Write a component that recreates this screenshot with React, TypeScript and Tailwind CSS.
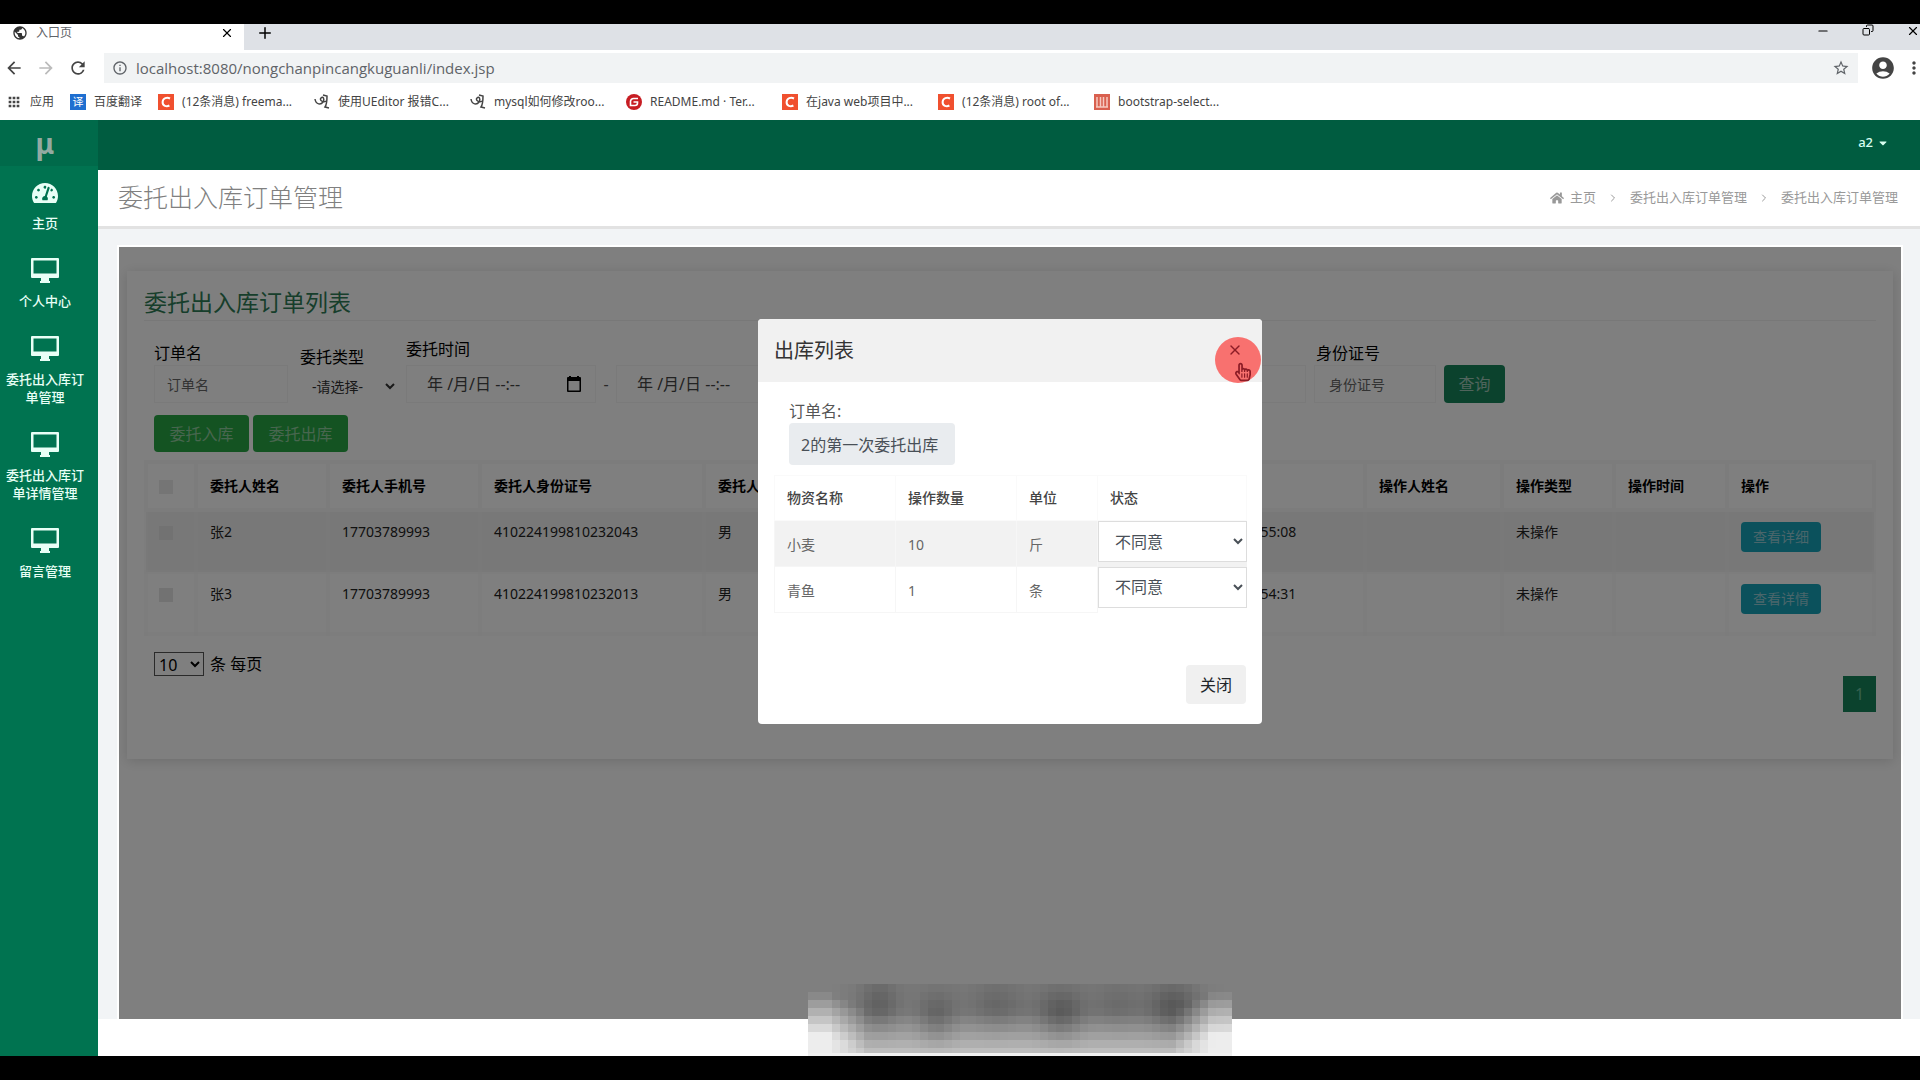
import React from 'react';
import {
  MdArrowBack,
  MdArrowForward,
  MdRefresh,
  MdInfoOutline,
  MdStarBorder,
  MdAccountCircle,
  MdMoreVert,
  MdApps,
  MdPublic,
} from 'react-icons/md';
import { FaTachometerAlt, FaHome, FaCaretDown, FaRegHandPointer } from 'react-icons/fa';
import { FiX, FiPlus, FiMinus, FiCopy, FiChevronRight } from 'react-icons/fi';

const bookmarks = [
  { icon: 'csdn', label: '(12条消息) freema...' },
  { icon: 'spring', label: '使用UEditor 报错C...' },
  { icon: 'spring', label: 'mysql如何修改roo...' },
  { icon: 'gitee', label: 'README.md · Ter...' },
  { icon: 'csdn', label: '在java web项目中...' },
  { icon: 'csdn', label: '(12条消息) root of...' },
  { icon: 'book', label: 'bootstrap-select...' },
];

const menuItems = [
  { label: '主页', icon: 'gauge' },
  { label: '个人中心', icon: 'monitor' },
  { label: '委托出入库订单管理', icon: 'monitor' },
  { label: '委托出入库订单详情管理', icon: 'monitor' },
  { label: '留言管理', icon: 'monitor' },
];

const columns = [
  '委托人姓名',
  '委托人手机号',
  '委托人身份证号',
  '委托人性别',
  '',
  '',
  '委托时间',
  '操作人姓名',
  '操作类型',
  '操作时间',
  '操作',
];

const orders = [
  ['张2', '17703789993', '410224199810232043', '男', '', '', '2021-03-05 13:55:08', '', '未操作', ''],
  ['张3', '17703789993', '410224199810232013', '男', '', '', '2021-03-05 13:54:31', '', '未操作', ''],
];

const goods = [
  { name: '小麦', count: 10, unit: '斤' },
  { name: '青鱼', count: 1, unit: '条' },
];

function BookmarkIcon({ type }: { type: string }) {
  if (type === 'csdn') {
    return (
      <svg viewBox="0 0 16 16" className="h-4 w-4 shrink-0">
        <rect width="16" height="16" fill="#f0502f" />
        <path d="M12 4.500C9 3 5 4 4.600 8c-.2 4 4 5 6.800 3.500" fill="none" stroke="#fff" strokeWidth="2" />
      </svg>
    );
  }
  if (type === 'gitee') {
    return (
      <svg viewBox="0 0 16 16" className="h-4 w-4 shrink-0">
        <circle cx="8" cy="8" r="8" fill="#c71d23" />
        <path d="M12 4.500H7.500a3 3 0 0 0-3 3v4h4.500a2.500 2.500 0 0 0 2.500-2.500v-1H7.500" fill="none" stroke="#fff" strokeWidth="1.600" />
      </svg>
    );
  }
  if (type === 'book') {
    return (
      <svg viewBox="0 0 16 16" className="h-4 w-4 shrink-0">
        <rect width="16" height="16" fill="#d9604f" />
        <path d="M3 3v10M6.500 3v10M9.500 3v10M13 3v10M2 13h12" stroke="#f6c9c0" strokeWidth="1.500" />
      </svg>
    );
  }
  return (
    <svg viewBox="0 0 16 16" className="h-4 w-4 shrink-0" fill="none" stroke="#444" strokeWidth="1.500">
      <path d="M1 5c1 6 6 6 8 3s0-6-2-4 2 5 5 3M9 1l4 1c0 4 0 8-2 11l4 1" />
    </svg>
  );
}

function MonitorIcon() {
  return (
    <svg viewBox="0 0 28 26" className="h-[26px] w-7" fill="#e8fff6">
      <path fillRule="evenodd" d="M1 0h26a1 1 0 0 1 1 1v18a1 1 0 0 1-1 1H1a1 1 0 0 1-1-1V1a1 1 0 0 1 1-1zm1.500 2.500v13h23v-13z" />
      <path d="M10 20h8v3h1v2H9v-2h1z" />
    </svg>
  );
}

function DatePickerIcon() {
  return (
    <svg viewBox="0 0 18 18" className="h-[18px] w-[18px] shrink-0" fill="#000">
      <path fillRule="evenodd" d="M4 1h2v1h6V1h2v1h1a1 1 0 0 1 1 1v13a1 1 0 0 1-1 1H3a1 1 0 0 1-1-1V3a1 1 0 0 1 1-1h1zM3.500 6v9.500h11V6z" />
    </svg>
  );
}

function BrowserChrome() {
  return (
    <div className="text-[#5f6368]">
      <div className="flex h-[26px] items-stretch bg-[#dee1e6]">
        <div className="flex w-[244px] items-start bg-white pl-3 pr-2.5 text-xs leading-[18px]">
          <MdPublic className="mr-2 h-[18px] w-4 text-[#333]" />
          <span className="flex-1">入口页</span>
          <button aria-label="关闭标签页" className="pt-0.5">
            <FiX className="h-3.5 w-3.5 text-black" />
          </button>
        </div>
        <button aria-label="新标签页" className="ml-3 self-start">
          <FiPlus className="h-[18px] w-[18px] text-black" />
        </button>
        <div className="ml-auto flex items-start gap-8 text-black">
          <FiMinus className="h-3.5 w-3.5" />
          <FiCopy className="h-3 w-3 -scale-x-100" />
          <FiX className="h-3.5 w-3.5" />
        </div>
      </div>
      <div className="flex h-9 items-center bg-white px-1">
        <button aria-label="后退" className="w-8">
          <MdArrowBack className="h-5 w-5 text-[#444]" />
        </button>
        <button aria-label="前进" className="w-8">
          <MdArrowForward className="h-5 w-5 text-[#bbb]" />
        </button>
        <button aria-label="刷新" className="w-9">
          <MdRefresh className="h-5 w-5 text-[#444]" />
        </button>
        <div className="flex h-[30px] flex-1 items-center bg-[#f1f3f4] px-2">
          <MdInfoOutline className="mr-2 h-4 w-4" />
          <input
            aria-label="地址"
            className="flex-1 bg-transparent font-['Open_Sans'] text-[15px] outline-none"
            defaultValue="localhost:8080/nongchanpincangkuguanli/index.jsp"
          />
          <MdStarBorder className="h-[18px] w-[18px]" />
        </div>
        <MdAccountCircle className="ml-3 h-[26px] w-[26px] text-[#444]" />
        <MdMoreVert className="ml-2 -mr-2 h-5 w-5 text-[#444]" />
      </div>
      <div className="flex h-[34px] items-center bg-white pb-0.5 pl-1.5 text-xs whitespace-nowrap text-[#444]">
        <MdApps className="mr-2 h-4 w-4" />
        <a href="#apps" className="mr-4">
          应用
        </a>
        <span className="mr-2 flex h-4 w-4 items-center justify-center bg-[#1f6fd0] text-[11px] text-white">译</span>
        <a href="#fanyi" className="mr-4">
          百度翻译
        </a>
        {bookmarks.map((item) => (
          <a key={item.label} href="#bookmark" className="flex w-[156px] items-center gap-2">
            <BookmarkIcon type={item.icon} />
            {item.label}
          </a>
        ))}
      </div>
    </div>
  );
}

function Sidebar() {
  return (
    <aside className="w-[98px] shrink-0 bg-[#007350]">
      <div className="flex h-[46px] items-center justify-center bg-[#006a4a] pr-2 text-[28px] font-bold text-[#93aaa2]">
        μ
      </div>
      <nav>
        {menuItems.map((item) => (
          <a
            key={item.label}
            href="#menu"
            className="flex flex-col items-center py-3 pr-3 pl-1 text-center text-[13px] leading-[18px] font-medium text-[#e8fff6]"
          >
            <span className="mb-2 flex h-7 items-end">
              {item.icon === 'gauge' ? <FaTachometerAlt className="h-[26px] w-[26px]" /> : <MonitorIcon />}
            </span>
            {item.label}
          </a>
        ))}
      </nav>
    </aside>
  );
}

const fieldClass = 'h-[38px] border border-[#f4f4f4] bg-white text-sm text-[#555] placeholder:text-[#666]';

function DateField({ label, id }: { label?: string; id: string }) {
  return (
    <div className="flex flex-col">
      {label && (
        <label htmlFor={id} className="mb-1 leading-6">
          {label}
        </label>
      )}
      <div className={`flex w-[190px] items-center pr-3 pl-5 ${fieldClass}`}>
        <input id={id} aria-label="委托时间" className="w-full text-base outline-none placeholder:text-[#444]" placeholder="年 /月/日 --:--" />
        <DatePickerIcon />
      </div>
    </div>
  );
}

function OrderPage() {
  return (
    <div className="mx-2 mt-6 bg-white px-[17px] pt-3 pb-[47px] text-base text-black shadow-[0_2px_12px_rgba(0,0,0,0.15)]">
      <h3 className="h-[38px] border-b border-[#f0f0f0] text-[23px] leading-[38px] text-[#2f7d57]">委托出入库订单列表</h3>

      <form className="mt-4 flex items-end pl-2.5">
        <div className="mr-3 flex flex-col">
          <label htmlFor="name" className="leading-6">
            订单名
          </label>
          <input id="name" placeholder="订单名" className={`w-[134px] px-3 ${fieldClass}`} />
        </div>
        <div className="mr-2 flex flex-col">
          <label htmlFor="type" className="leading-6">
            委托类型
          </label>
          <select id="type" className="h-[34px] w-[98px] bg-white px-2 text-sm text-[#333]">
            <option>-请选择-</option>
          </select>
        </div>
        <DateField id="start" label="委托时间" />
        <span className="w-5 text-center leading-[38px] text-[#555]">-</span>
        <DateField id="end" />
        <div className="mr-2 ml-[378px] flex flex-col">
          <label htmlFor="phone" className="leading-6">
            手机号
          </label>
          <input id="phone" className={`w-[122px] px-3 ${fieldClass}`} />
        </div>
        <div className="mr-2 flex flex-col">
          <label htmlFor="card" className="pl-0.5 leading-6">
            身份证号
          </label>
          <input id="card" placeholder="身份证号" className={`w-[122px] px-3.5 ${fieldClass}`} />
        </div>
        <button type="button" className="h-[38px] w-[61px] rounded-sm bg-[#17855a] text-[#a0c8b8]">
          查询
        </button>
      </form>

      <div className="mt-3 flex gap-1 pl-2.5">
        <button className="h-[37px] w-[95px] rounded-sm bg-[#28a745] text-[#90cd9e]">委托入库</button>
        <button className="h-[37px] w-[95px] rounded-sm bg-[#28a745] text-[#90cd9e]">委托出库</button>
      </div>

      <table className="mt-2 w-full table-fixed border-collapse text-left text-sm">
        <colgroup>
          <col className="w-[50px]" />
          <col className="w-[132px]" />
          <col className="w-[152px]" />
          <col className="w-[224px]" />
          <col className="w-[120px]" />
          <col className="w-[160px]" />
          <col className="w-[166px]" />
          <col className="w-[215px]" />
          <col className="w-[137px]" />
          <col className="w-[112px]" />
          <col className="w-[113px]" />
          <col className="w-[147px]" />
        </colgroup>
        <thead>
          <tr className="h-12">
            <th className="border-4 border-[#f8f8f8] pr-2.5 text-center">
              <input type="checkbox" aria-label="全选" className="h-3.5 w-3.5 appearance-none bg-[#eaeaea] align-middle" />
            </th>
            {columns.map((column, i) => (
              <th key={i} className="border-4 border-[#f8f8f8] px-3 font-bold">
                {column}
              </th>
            ))}
          </tr>
        </thead>
        <tbody>
          {orders.map((row, i) => (
            <tr key={row[0]} className="h-[62px] align-top leading-5 text-[#222] odd:bg-[#f0f0f0]">
              <td className="border-4 border-[#f6f6f6]/50 pt-2.5 pr-2.5 text-center">
                <input type="checkbox" aria-label={`选择${row[0]}`} className="h-3.5 w-3.5 appearance-none bg-[#e4e4e4] align-middle" />
              </td>
              {row.map((cell, j) => (
                <td key={j} className="border-4 border-[#f6f6f6]/50 px-3 pt-2.5">
                  {cell}
                </td>
              ))}
              <td className="border-4 border-[#f6f6f6]/50 px-3 pt-2.5">
                <button className="h-[30px] w-20 rounded-sm bg-[#17a2b8] text-[#95ccd6]">{i === 0 ? '查看详细' : '查看详情'}</button>
              </td>
            </tr>
          ))}
        </tbody>
      </table>

      <div className="mt-4 flex items-start pl-2.5">
        <label className="flex items-center gap-1.5">
          <select className="h-6 w-[50px] border border-[#555] bg-white text-base leading-5">
            <option>10</option>
          </select>
          条 每页
        </label>
        <button className="mt-6 ml-auto h-9 w-[33px] bg-[#17855a] text-[#6fc29f]">1</button>
      </div>
    </div>
  );
}

function OutboundModal() {
  return (
    <div role="dialog" aria-labelledby="modal-title" className="w-[504px] rounded-sm bg-white">
      <div className="relative flex h-[63px] items-center justify-between rounded-t-sm bg-[#f1f1f1] px-4">
        <h4 id="modal-title" className="text-xl text-[#333]">
          出库列表
        </h4>
        {/* click highlight with the pointer over the close button */}
        <button aria-label="关闭对话框" className="absolute top-[18px] right-px flex h-[46px] w-[46px] rounded-full bg-[#f8716f] pt-[5px] pl-3">
          <FiX className="h-4 w-4 text-[#8c1c26]" />
          <FaRegHandPointer className="absolute right-2.5 bottom-0 h-[22px] w-4 text-[#8c1c26]" />
        </button>
      </div>
      <div className="px-4 pt-[17px]">
        <div className="flex flex-col items-start pl-[15px] text-[#555]">
          <label htmlFor="order" className="leading-6">
            订单名:
          </label>
          <input id="order" readOnly defaultValue="2的第一次委托出库" className="h-[42px] w-[166px] rounded-sm bg-[#e9ecef] px-3 text-base text-[#495057]" />
        </div>
        <table className="mt-2.5 w-full table-fixed border-collapse text-left text-sm text-[#666]">
          <colgroup>
            <col className="w-[121px]" />
            <col className="w-[121px]" />
            <col className="w-[81px]" />
            <col className="w-[149px]" />
          </colgroup>
          <thead>
            <tr className="h-[45px] text-[#444]">
              {['物资名称', '操作数量', '单位', '状态'].map((head) => (
                <th key={head} className="border border-[#fafafa] px-3 font-medium">
                  {head}
                </th>
              ))}
            </tr>
          </thead>
          <tbody>
            {goods.map((item) => (
              <tr key={item.name} className="h-[46px] odd:bg-[#f2f2f2]">
                <td className="border border-[#f6f6f6] px-3 pt-0.5">{item.name}</td>
                <td className="border border-[#f6f6f6] px-3 pt-0.5">{item.count}</td>
                <td className="border border-[#f6f6f6] px-3 pt-0.5">{item.unit}</td>
                <td className="p-0 align-top">
                  <select aria-label={`${item.name}状态`} className="h-[41px] w-full border border-[#ddd] bg-white px-3 text-base text-[#495057]">
                    <option>不同意</option>
                    <option>同意</option>
                  </select>
                </td>
              </tr>
            ))}
          </tbody>
        </table>
      </div>
      <div className="flex justify-end px-4 pt-[52px] pb-5">
        <button className="h-[39px] w-[60px] rounded-sm bg-[#f0f0f0] text-base text-[#212529]">关闭</button>
      </div>
    </div>
  );
}

// caption strip, drawn as 8px mosaic cells: x, y, radius x, depth
const blobs = [
  [67, 18, 13, 24],
  [125, 32, 13, 26],
  [185, 20, 18, 18],
  [249, 28, 16, 34],
  [305, 20, 16, 14],
  [362, 22, 18, 34],
];

function Mosaic() {
  const cells = [];
  for (let y = 0; y < 72; y += 8) {
    for (let x = 0; x < 424; x += 8) {
      // 0 at both ends of the strip, 1 in the middle
      const inner = Math.min(1, Math.max(0, Math.min(x - 16, 400 - x) / 40));
      const start = 4 + inner * 18;
      const t = Math.min(1, Math.max(0, (y - start) / 44));
      let v = 127 - inner * 6 + t * (110 - inner * 38);
      for (const [bx, by, s, depth] of blobs) {
        const d = ((x - bx) / s) ** 2 + ((y - by) / 18) ** 2;
        v -= depth * Math.exp(-d / 2);
      }
      const c = Math.round(v);
      cells.push(<rect key={`${x}-${y}`} x={x} y={y} width="8" height="8" fill={`rgb(${c},${c},${c})`} />);
    }
  }
  return (
    <svg viewBox="0 0 424 72" className="absolute bottom-0 left-[710px] h-[72px] w-[424px]" shapeRendering="crispEdges">
      {cells}
      <rect y="69" width="424" height="3" fill="#f0f0f0" />
    </svg>
  );
}

export default function App() {
  return (
    <div className="flex min-h-screen flex-col overflow-hidden bg-black py-6 font-['Noto_Sans','Noto_Sans_CJK_SC',sans-serif]">
      <BrowserChrome />
      <div className="flex flex-1">
        <Sidebar />
        <div className="relative flex min-w-0 flex-1 flex-col bg-white">
          <header className="flex h-[50px] items-center justify-end bg-[#005c40] pr-[31px] pb-1 text-[13px] font-medium text-[#d8fff0]">
            <button className="flex items-center gap-1">
              a2 <FaCaretDown className="h-3 w-3" />
            </button>
          </header>
          <div className="flex h-[59px] items-center justify-between border-b-3 border-[#e2e2e2] pr-[22px] pl-5">
            <h1 className="text-[25px] font-light text-[#808080]">委托出入库订单管理</h1>
            <nav className="flex items-center text-[13px] text-[#999]">
              <FaHome className="mr-1.5 h-3.5 w-3.5" />
              <a href="#home">主页</a>
              <FiChevronRight className="mx-[11px] h-3 w-3" />
              <a href="#orders">委托出入库订单管理</a>
              <FiChevronRight className="mx-[11px] h-3 w-3" />
              <a href="#orders">委托出入库订单管理</a>
            </nav>
          </div>
          <div className="flex flex-1 bg-[#f2f4f6] pt-4 pr-5 pl-[19px]">
            <main className="relative flex-1 border-x-2 border-t-2 border-white bg-white">
              <div className="flow-root">
                <OrderPage />
              </div>
              <div className="absolute inset-0 flex items-start justify-center bg-black/50 pt-[72px]">
                <OutboundModal />
              </div>
            </main>
          </div>
          <div className="h-[37px] bg-white" />
          <Mosaic />
        </div>
      </div>
    </div>
  );
}
